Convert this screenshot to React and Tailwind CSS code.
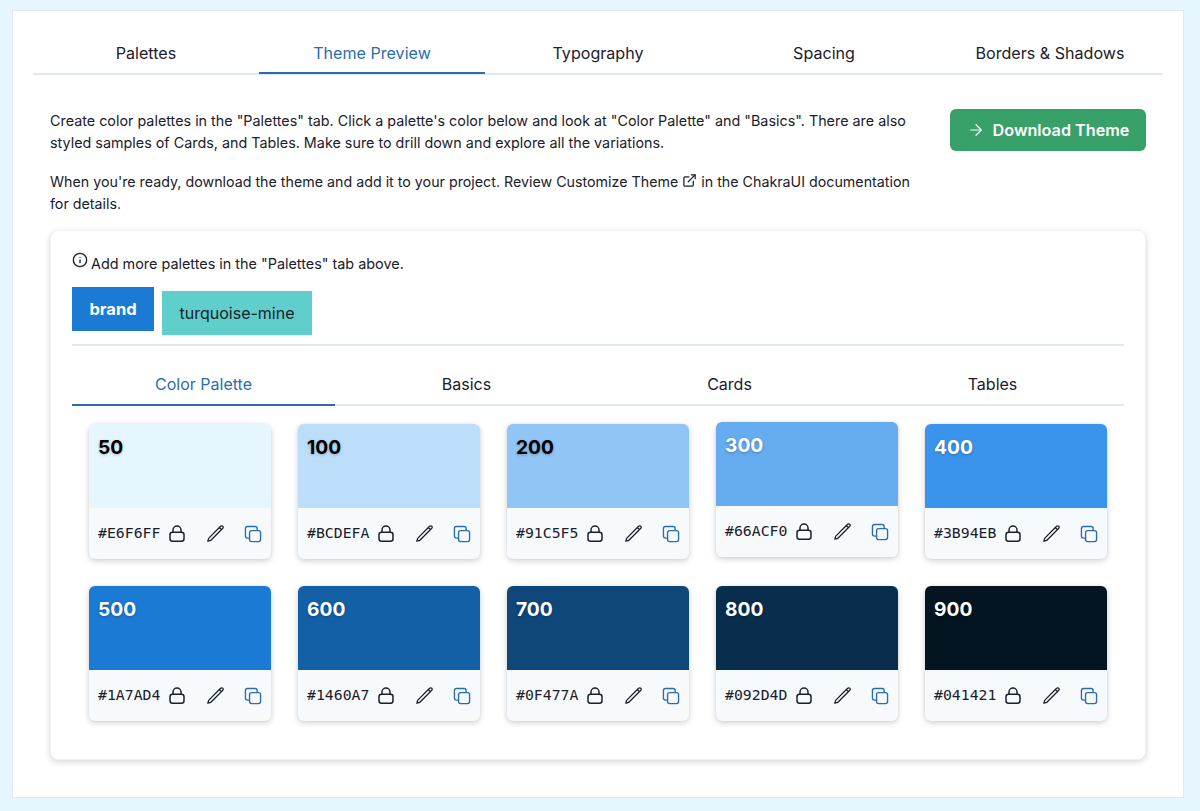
import React from "react";

const Lock = () => (
  <svg viewBox="0 0 16 17" fill="none" stroke="#1A202C" strokeWidth="1.5" strokeLinecap="round" strokeLinejoin="round" className="w-[16px] h-[17px]">
    <rect x="1" y="7.25" width="14" height="9" rx="2.5" />
    <path d="M4 7.25V5a4 4 0 0 1 8 0v2.25" />
  </svg>
);
const Pencil = () => (
  <svg viewBox="0 0 24 24" fill="none" stroke="#1A202C" strokeWidth="1.6" strokeLinecap="round" strokeLinejoin="round" className="w-[19px] h-[19px]">
    <path d="m16.862 4.487 1.687-1.688a1.875 1.875 0 1 1 2.652 2.652L6.832 19.82a4.5 4.5 0 0 1-1.897 1.13l-2.685.8.8-2.685a4.5 4.5 0 0 1 1.13-1.897L16.863 4.487Zm0 0L19.5 7.125" />
  </svg>
);
const Copy = () => (
  <svg viewBox="0 0 24 24" fill="none" stroke="#2B6CB0" strokeWidth="1.5" strokeLinecap="round" strokeLinejoin="round" className="w-[22px] h-[22px]">
    <path d="M16.5 8.25V6a2.25 2.25 0 0 0-2.25-2.25H6A2.25 2.25 0 0 0 3.75 6v8.25A2.25 2.25 0 0 0 6 16.5h2.25m8.25-8.25H18a2.25 2.25 0 0 1 2.25 2.25V18A2.25 2.25 0 0 1 18 20.25h-7.5A2.25 2.25 0 0 1 8.25 18v-1.5m8.25-8.25h-6a2.25 2.25 0 0 0-2.25 2.25v6" />
  </svg>
);
const External = () => (
  <svg viewBox="0 0 24 24" fill="none" stroke="#1A202C" strokeWidth="2" strokeLinecap="round" strokeLinejoin="round" className="inline-block w-[15px] h-[15px] -my-[4px] align-[3px]">
    <path d="M18 13v6a2 2 0 0 1-2 2H5a2 2 0 0 1-2-2V8a2 2 0 0 1 2-2h6" />
    <path d="M15 3h6v6" />
    <path d="M10 14 21 3" />
  </svg>
);
const Info = () => (
  <svg viewBox="0 0 24 24" fill="none" stroke="#1A202C" strokeWidth="2" strokeLinecap="round" strokeLinejoin="round" className="inline-block w-[16px] h-[16px] mr-[3px] align-[1px]">
    <circle cx="12" cy="12" r="10" />
    <path d="M12 16v-4" />
    <path d="M12 8h.01" />
  </svg>
);
const Arrow = () => (
  <svg viewBox="0 0 24 24" fill="none" stroke="#FFFFFF" strokeWidth="1.6" strokeLinecap="round" strokeLinejoin="round" className="w-[18px] h-[18px]">
    <path d="M5 12h14" />
    <path d="m12 5 7 7-7 7" />
  </svg>
);

const Tab = ({ label, active, top }) => (
  <div className={
    (top ? "pt-[2px] " : "") +
    (active
      ? "flex-1 h-[42px] -mb-[2px] flex items-center justify-center border-b-2 border-[#2B6CB0] text-[#2B6CB0]"
      : "flex-1 h-[42px] -mb-[2px] flex items-center justify-center border-b-2 border-transparent text-[#1A202C]")
  }>
    {label}
  </div>
);

const colors = [
  { n: "50", hex: "#E6F6FF", bg: "bg-[#E6F6FF]", fg: "text-black" },
  { n: "100", hex: "#BCDEFA", bg: "bg-[#BCDEFA]", fg: "text-black" },
  { n: "200", hex: "#91C5F5", bg: "bg-[#91C5F5]", fg: "text-black" },
  { n: "300", hex: "#66ACF0", bg: "bg-[#66ACF0]", fg: "text-white", lifted: true },
  { n: "400", hex: "#3B94EB", bg: "bg-[#3B94EB]", fg: "text-white" },
  { n: "500", hex: "#1A7AD4", bg: "bg-[#1A7AD4]", fg: "text-white" },
  { n: "600", hex: "#1460A7", bg: "bg-[#1460A7]", fg: "text-white" },
  { n: "700", hex: "#0F477A", bg: "bg-[#0F477A]", fg: "text-white" },
  { n: "800", hex: "#092D4D", bg: "bg-[#092D4D]", fg: "text-white" },
  { n: "900", hex: "#041421", bg: "bg-[#041421]", fg: "text-white" },
];

const Card = ({ c }) => (
  <div className={
    (c.lifted ? "-translate-y-[2px] " : "") +
    "w-[182px] h-[135px] rounded-md overflow-hidden bg-[#F7FAFC] shadow-[0_2px_6px_rgba(0,0,0,0.18),0_0_2px_rgba(0,0,0,0.08)]"
  }>
    <div className={"h-[84px] px-[9px] pt-[9px] " + c.bg}>
      <div className={"text-[19.2px] leading-[28px] font-bold [text-shadow:0_1px_3px_rgba(0,0,0,0.25)] " + c.fg}>{c.n}</div>
    </div>
    <div className="h-[51px] flex items-center pl-[9px]">
      <span className="w-[62px] text-[14.8px] text-[#1A202C] [font-family:'DejaVu_Sans_Mono',monospace]">{c.hex}</span>
      <span className="ml-[9px] mt-[-1px]"><Lock /></span>
      <span className="ml-[21px]"><Pencil /></span>
      <span className="ml-[17px]"><Copy /></span>
    </div>
  </div>
);

export default function App() {
  return (
    <div className="min-h-[811px] bg-[#E6F6FF] pt-[10px] pl-[12px] pr-[16px] pb-[13px] text-[#1A202C] [font-family:Inter,'Liberation_Sans',sans-serif]">
      <div className="bg-white border border-[#E2E8F0] h-[788px] pt-[21px] px-[20px]">
        <div className="flex border-b-2 border-[#E2E8F0] text-[16.1px] h-[43px]">
          <Tab top label="Palettes" />
          <Tab top label="Theme Preview" active />
          <Tab top label="Typography" />
          <Tab top label="Spacing" />
          <Tab top label="Borders & Shadows" />
        </div>

        <div className="px-[17px] pt-[35px]">
          <div className="flex justify-between">
            <div className="w-[880px] text-[14.35px] leading-[22px]">
              <p>Create color palettes in the "Palettes" tab. Click a palette's color below and look at "Color Palette" and "Basics". There are also styled samples of Cards, and Tables. Make sure to drill down and explore all the variations.</p>
              <p className="mt-[17px] text-[14.26px]">When you're ready, download the theme and add it to your project. Review Customize Theme <External /> in the ChakraUI documentation for details.</p>
            </div>
            <button className="w-[196px] h-[42px] -mt-[1px] rounded-md bg-[#38A169] text-white text-[16.2px] font-semibold flex items-center justify-center gap-[8px]">
              <Arrow />
              Download Theme
            </button>
          </div>

          <div className="mt-[15px] h-[530px] rounded-lg bg-white border border-[#EDF2F7] shadow-[0_2px_6px_rgba(0,0,0,0.16)] px-[21px] pt-[21px]">
            <div className="text-[14.4px] leading-[20px]"><Info />Add more palettes in the "Palettes" tab above.</div>
            <div className="flex items-start gap-[8px] mt-[13px]">
              <div className="w-[82px] h-[44px] flex items-center justify-center bg-[#1A7AD4] text-white text-[16.5px] font-bold">brand</div>
              <div className="w-[150px] h-[44px] mt-[4px] flex items-center justify-center bg-[#60CFCB] text-[16px]">turquoise-mine</div>
            </div>
            <div className="mt-[9px] border-t-2 border-[#E2E8F0]" />
            <div className="flex border-b-2 border-[#E2E8F0] text-[16px] h-[60px] items-end">
              <Tab label="Color Palette" active />
              <Tab label="Basics" />
              <Tab label="Cards" />
              <Tab label="Tables" />
            </div>
            <div className="grid grid-cols-5 gap-x-[27px] gap-y-[27px] px-[17px] pt-[18px]">
              {colors.map((c) => <Card key={c.n} c={c} />)}
            </div>
          </div>
        </div>
      </div>
    </div>
  );
}
